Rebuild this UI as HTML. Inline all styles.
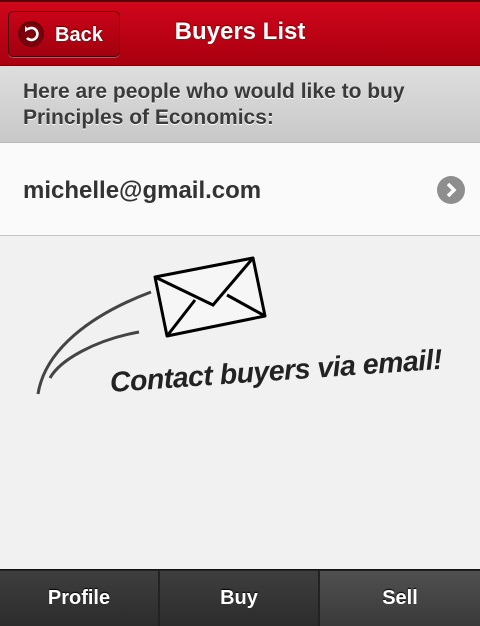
<!DOCTYPE html>
<html><head><meta charset="utf-8"><style>
*{margin:0;padding:0;box-sizing:border-box}
body{width:480px;height:626px;overflow:hidden;background:#f1f1f1;font-family:"Liberation Sans",sans-serif;position:relative}
.hdr{position:absolute;top:0;left:0;width:480px;height:66px;background:linear-gradient(#d0061c,#a8000f);border-top:2px solid #5a0008;border-bottom:1px solid #70000a}
.hdr h1{position:absolute;left:0;right:0;top:16px;text-align:center;color:#fff;font-size:24px;font-weight:bold;text-shadow:0 -1px 1px #600}
.back{position:absolute;left:8px;top:9px;width:112px;height:46px;border:1px solid #4a0006;border-radius:5px;background:linear-gradient(#c80418,#a2000f);box-shadow:0 1px 0 rgba(255,255,255,.3)}
.back .c{position:absolute;left:9px;top:9px;width:26px;height:26px;border-radius:50%;background:#7a000b;box-shadow:inset 0 1px 2px #400}
.back span{position:absolute;left:46px;top:12px;color:#fff;font-size:20px;font-weight:bold;text-shadow:0 -1px 1px #500}
.ban{position:absolute;top:66px;left:0;width:480px;height:77px;background:linear-gradient(#dedede,#c8c8c8);border-bottom:1px solid #b8b8b8;padding:13px 0 0 23px;font-size:21px;font-weight:bold;color:#3a3a3a;line-height:26px;text-shadow:0 1px 0 #fff}
.row{position:absolute;top:143px;left:0;width:480px;height:93px;background:#fafafa;border-bottom:1px solid #c4c4c4}
.row span{position:absolute;left:23px;top:34px;font-size:24px;font-weight:bold;color:#333}
.chev{position:absolute;left:437px;top:176px;width:28px;height:28px;border-radius:50%;background:#8e8e8e}
.tabs{position:absolute;top:569px;left:0;width:480px;height:57px;background:#222;border-top:1px solid #111}
.t{position:absolute;top:1px;height:55px;width:158px;background:linear-gradient(#3e3e3e,#2c2c2c);color:#fff;font-weight:bold;font-size:20px;text-align:center;line-height:55px;text-shadow:0 -1px 1px #000}
.hand{position:absolute;left:110px;top:367px;font-family:"Liberation Sans",sans-serif;font-style:italic;font-size:28.5px;color:#222;transform:rotate(-4deg);transform-origin:left;letter-spacing:-0.5px;font-weight:bold}
</style></head><body>
<div class="hdr">
<div class="back"><div class="c"><svg width="26" height="26" viewBox="0 0 26 26"><path d="M10 8 A6 6 0 1 1 9 17" fill="none" stroke="#fff" stroke-width="2.6"/><path d="M7 5 L11 8.5 L7 11 Z" fill="#fff"/></svg></div><span>Back</span></div>
<h1>Buyers List</h1>
</div>
<div class="ban">Here are people who would like to buy<br>Principles of Economics:</div>
<div class="row"><span>michelle@gmail.com</span></div>
<div class="chev"><svg width="28" height="28" viewBox="0 0 28 28"><path d="M11 8 L17 14 L11 20" fill="none" stroke="#fff" stroke-width="3.5"/></svg></div>
<svg style="position:absolute;left:0;top:0" width="480" height="626">
<path d="M155 277 L253 258 L265 316 L167 336 Z" fill="#f6f6f6" stroke="#000" stroke-width="3" stroke-linejoin="round"/>
<path d="M155 277 L213 305 L253 258" fill="none" stroke="#000" stroke-width="3"/>
<path d="M167 336 L195 300 M265 316 L227 295" stroke="#000" stroke-width="3"/>
<path d="M151 292 C90 315 45 350 38 394" fill="none" stroke="#444" stroke-width="3"/>
<path d="M139 332 C95 340 60 360 50 378" fill="none" stroke="#444" stroke-width="3"/>
</svg>
<div class="hand">Contact buyers via email!</div>
<div class="tabs">
<div class="t" style="left:0">Profile</div>
<div class="t" style="left:160px">Buy</div>
<div class="t" style="left:320px;width:160px;background:linear-gradient(#505050,#3a3a3a)">Sell</div>
</div>
</body></html>
